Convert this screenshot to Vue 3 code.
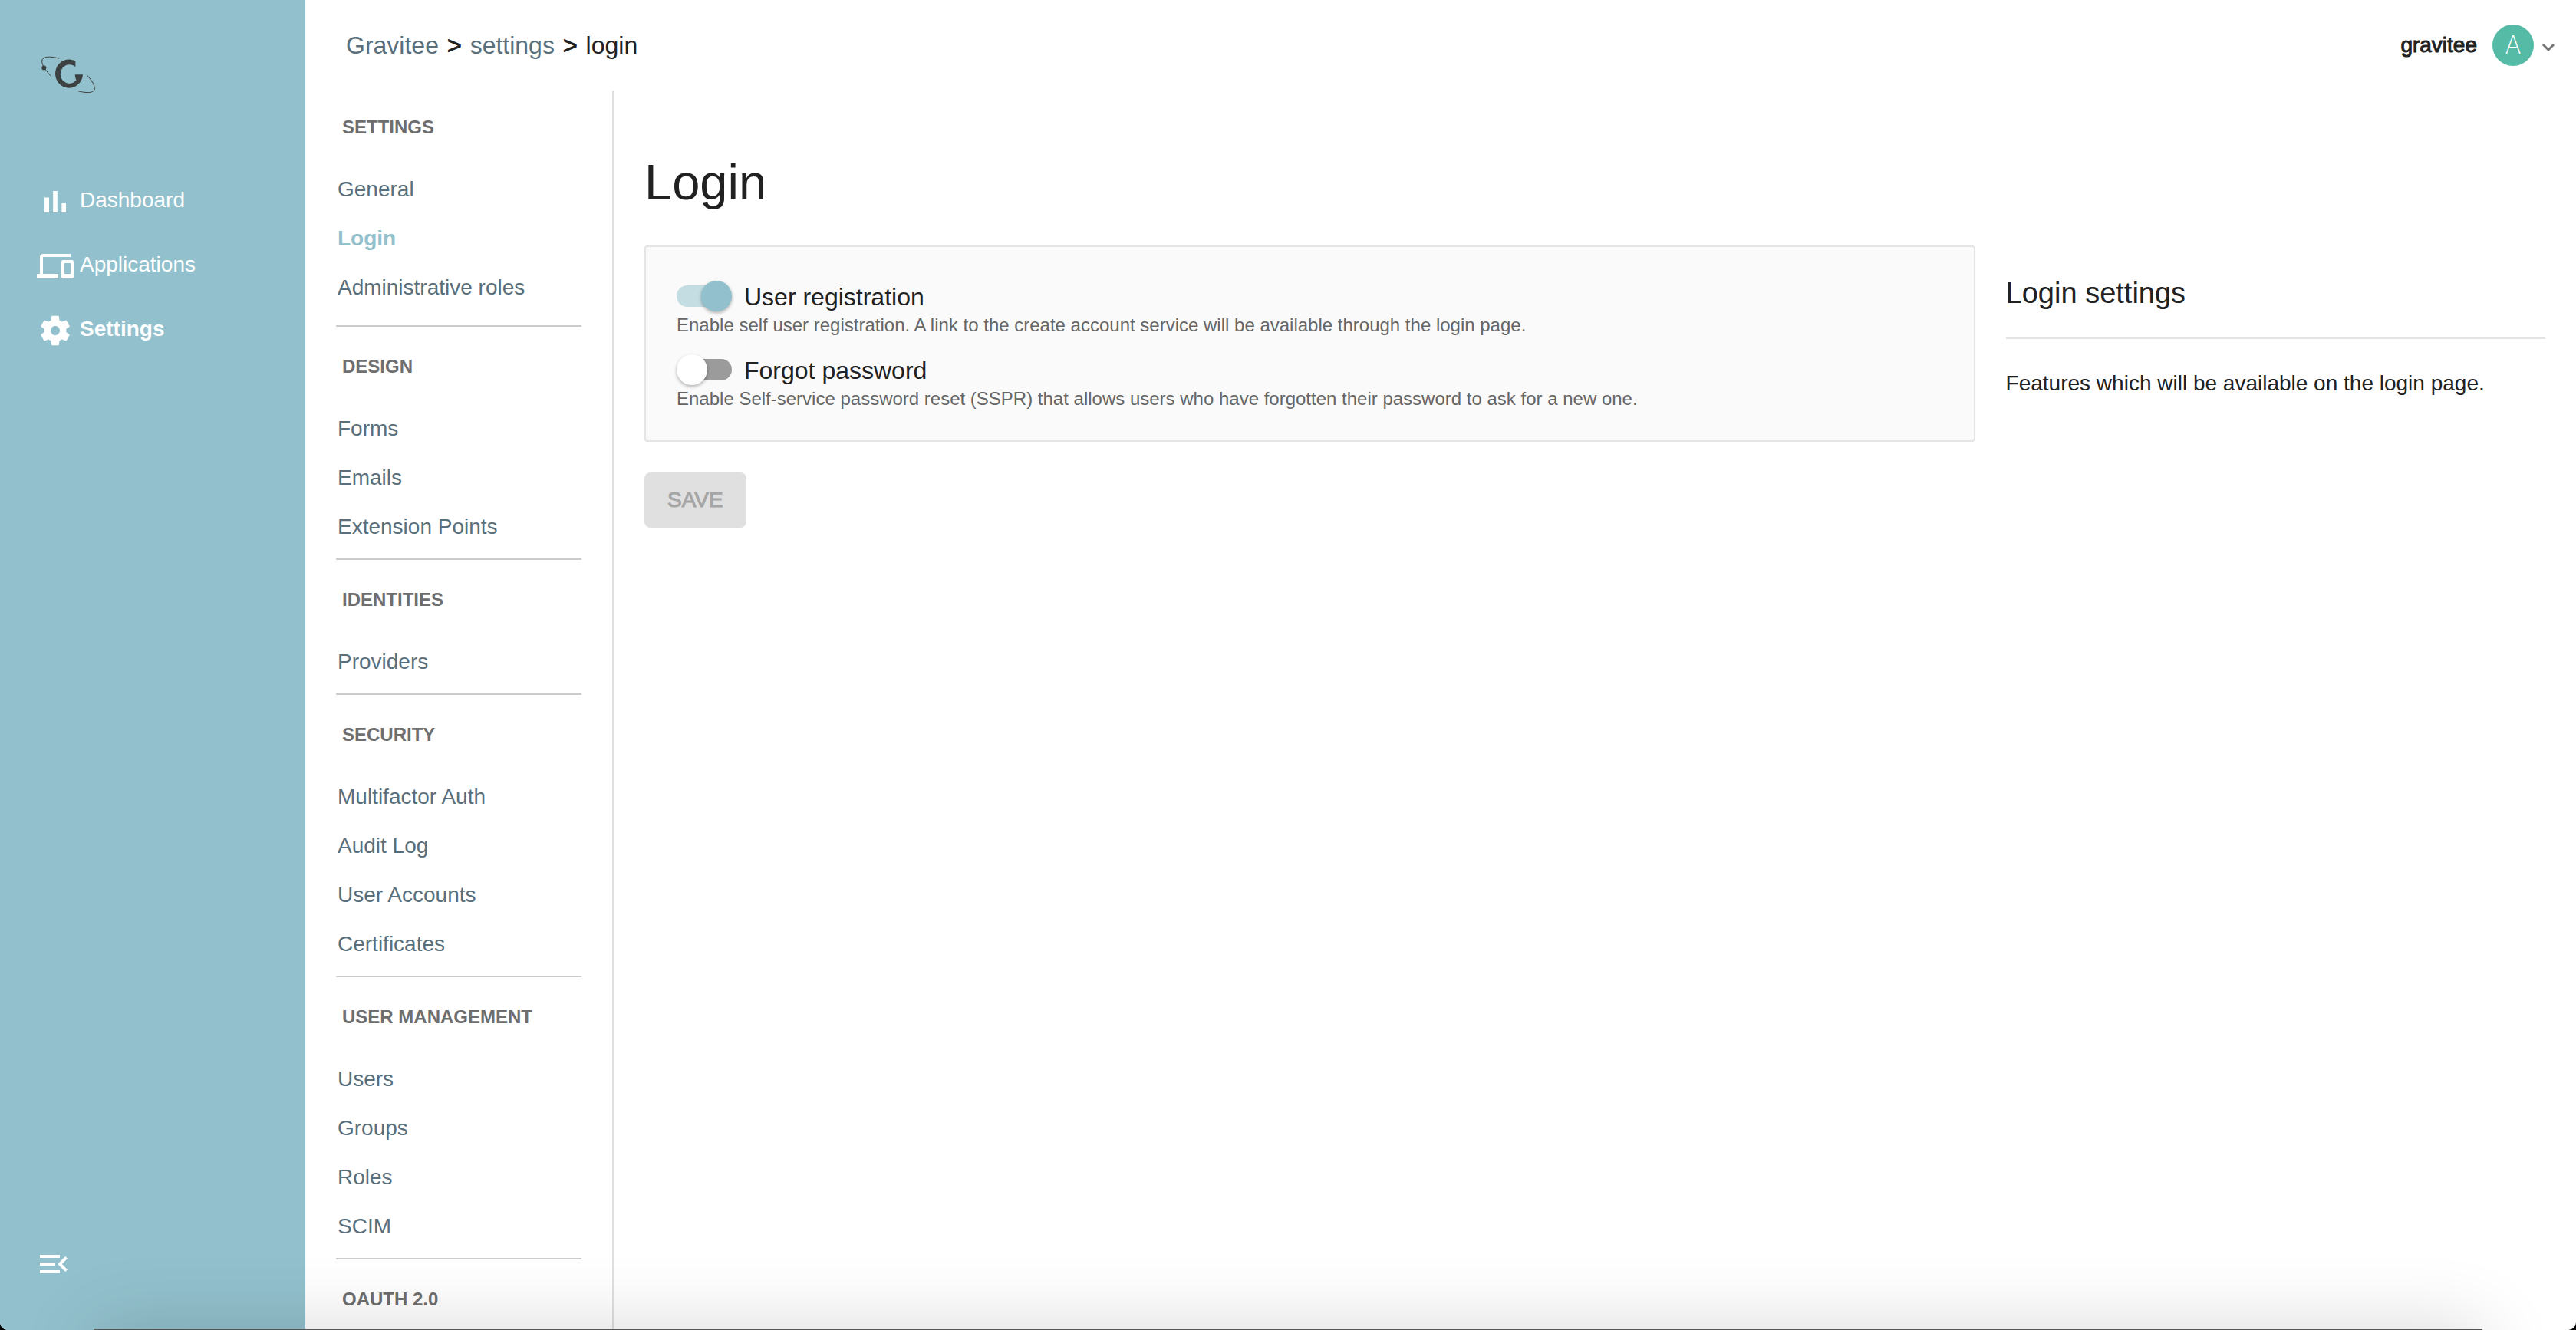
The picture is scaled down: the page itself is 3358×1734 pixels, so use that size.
<script setup>
import { reactive } from 'vue'

const mainNav = [
  { label: 'Dashboard', icon: 'M5 9.2h3V19H5zM10.6 5h2.8v14h-2.8zm5.6 8H19v6h-2.8z' },
  {
    label: 'Applications',
    icon: 'M4 6h18V4H4c-1.1 0-2 .9-2 2v11H0v3h14v-3H4V6zm19 2h-6c-.55 0-1 .45-1 1v10c0 .55.45 1 1 1h6c.55 0 1-.45 1-1V9c0-.55-.45-1-1-1zm-1 9h-4v-7h4v7z'
  },
  {
    label: 'Settings',
    active: true,
    icon: 'M19.14 12.94c.04-.3.06-.61.06-.94 0-.32-.02-.64-.07-.94l2.03-1.58c.18-.14.23-.41.12-.61l-1.92-3.32c-.12-.22-.37-.29-.59-.22l-2.39.96c-.5-.38-1.03-.7-1.62-.94l-.36-2.54c-.04-.24-.24-.41-.48-.41h-3.84c-.24 0-.43.17-.47.41l-.36 2.54c-.59.24-1.13.57-1.62.94l-2.39-.96c-.22-.08-.47 0-.59.22L2.74 8.87c-.12.21-.08.47.12.61l2.03 1.58c-.05.3-.09.63-.09.94s.02.64.07.94l-2.03 1.58c-.18.14-.23.41-.12.61l1.92 3.32c.12.22.37.29.59.22l2.39-.96c.5.38 1.03.7 1.62.94l.36 2.54c.05.24.24.41.48.41h3.84c.24 0 .44-.17.47-.41l.36-2.54c.59-.24 1.13-.56 1.62-.94l2.39.96c.22.08.47 0 .59-.22l1.92-3.32c.12-.22.07-.47-.12-.61l-2.01-1.58zM12 15c-1.65 0-3-1.35-3-3s1.35-3 3-3 3 1.35 3 3-1.35 3-3 3z'
  }
]

const settingsGroups = [
  { title: 'Settings', items: ['General', 'Login', 'Administrative roles'] },
  { title: 'Design', items: ['Forms', 'Emails', 'Extension Points'] },
  { title: 'Identities', items: ['Providers'] },
  { title: 'Security', items: ['Multifactor Auth', 'Audit Log', 'User Accounts', 'Certificates'] },
  { title: 'User Management', items: ['Users', 'Groups', 'Roles', 'SCIM'] },
  { title: 'OAuth 2.0', items: [] }
]
const currentItem = 'Login'

const options = reactive([
  {
    id: 'user-registration',
    label: 'User registration',
    enabled: true,
    hint: 'Enable self user registration. A link to the create account service will be available through the login page.'
  },
  {
    id: 'forgot-password',
    label: 'Forgot password',
    enabled: false,
    hint: 'Enable Self-service password reset (SSPR) that allows users who have forgotten their password to ask for a new one.'
  }
])
</script>

<template>
  <div class="app">
    <aside class="sidebar">
      <a href="#" class="logo" aria-label="Home">
        <svg width="77" height="54" viewBox="150 210 231 161" aria-hidden="true">
          <path class="logo-mark" d="M295 238A54 56 0 1 0 324 291H293Q294 304 298 313A35 37 0 1 1 295 262Z" />
          <path class="logo-orbit" d="M231 228C200 219 163 218 164 240C164 255 180 277 199 297" />
          <path class="logo-orbit" d="M340 293C360 315 372 335 370 348C366 366 332 363 303 355" />
          <circle class="logo-mark" cx="172" cy="265" r="9" />
        </svg>
      </a>
      <nav class="main-nav" aria-label="Main">
        <a v-for="item in mainNav" :key="item.label" href="#" :class="{ active: item.active }">
          <svg width="48" height="48" viewBox="0 0 24 24" aria-hidden="true"><path :d="item.icon" /></svg>
          <span>{{ item.label }}</span>
        </a>
      </nav>
      <button class="collapse" type="button" aria-label="Collapse menu">
        <svg width="48" height="48" viewBox="0 0 24 24" aria-hidden="true">
          <path d="M3 18h13v-2H3v2zM3 13h10v-2H3v2zm0-7v2h13V6H3zm18 9.59L17.42 12 21 8.41 19.59 7l-5 5 5 5L21 15.59z" />
        </svg>
      </button>
    </aside>

    <div class="page">
      <header class="topbar">
        <nav class="breadcrumb" aria-label="Breadcrumb">
          <a href="#">Gravitee</a>
          <span class="sep">&gt;</span>
          <a href="#">settings</a>
          <span class="sep">&gt;</span>
          <span>login</span>
        </nav>
        <button class="user" type="button">
          <span class="user-name">gravitee</span>
          <span class="avatar">A</span>
          <svg width="18" height="12" viewBox="0 0 18 12" aria-hidden="true"><path d="M2 2l7 7 7-7" /></svg>
        </button>
      </header>

      <div class="body">
        <nav class="settings-nav" aria-label="Settings">
          <section v-for="group in settingsGroups" :key="group.title">
            <h2>{{ group.title }}</h2>
            <ul v-if="group.items.length">
              <li v-for="item in group.items" :key="item">
                <a href="#" :class="{ active: item === currentItem }">{{ item }}</a>
              </li>
            </ul>
          </section>
        </nav>

        <main class="content">
          <h1>Login</h1>
          <div class="columns">
            <form class="form" @submit.prevent>
              <div class="card">
                <div v-for="option in options" :key="option.id" class="option">
                  <label :for="option.id">
                    <input
                      :id="option.id"
                      v-model="option.enabled"
                      type="checkbox"
                      role="switch"
                      :aria-describedby="option.id + '-hint'"
                    />
                    <span>{{ option.label }}</span>
                  </label>
                  <p :id="option.id + '-hint'">{{ option.hint }}</p>
                </div>
              </div>
              <button class="save" type="submit" disabled>Save</button>
            </form>
            <section class="help">
              <h3>Login settings</h3>
              <p>Features which will be available on the login page.</p>
            </section>
          </div>
        </main>
      </div>
    </div>
    <div class="edge-shadow" aria-hidden="true"></div>
  </div>
</template>

<style>
html,
body {
  margin: 0;
  background: #000;
}
</style>

<style scoped>
.app {
  position: relative;
  display: flex;
  height: 100vh;
  overflow: hidden;
  border-radius: 0 0 10px 10px;
  background: #fff;
  color: #212121;
  font-family: "Liberation Sans", Arial, sans-serif;
  font-size: 28px;
}
.app * {
  box-sizing: border-box;
}
a {
  color: inherit;
  text-decoration: none;
}
button {
  border: 0;
  padding: 0;
  background: none;
  font: inherit;
  color: inherit;
}
h1,
h2,
h3,
p,
ul {
  margin: 0;
  padding: 0;
  list-style: none;
  font-weight: 400;
}
svg {
  display: block;
  flex: none;
}

.sidebar {
  display: flex;
  flex: none;
  flex-direction: column;
  width: 398px;
  padding: 70px 46px 62px;
  background: #92c1cd;
  color: #fff;
}
.logo {
  padding-left: 4px;
}
.logo-mark {
  fill: #3d4040;
}
.logo-orbit {
  fill: none;
  stroke: #3d4040;
  stroke-width: 3;
}
.main-nav {
  display: flex;
  flex-direction: column;
  gap: 36px;
  margin-top: 115px;
  padding-left: 2px;
}
.main-nav a {
  display: flex;
  gap: 8px;
  height: 48px;
  line-height: 44px;
}
.main-nav svg,
.collapse svg {
  fill: #fff;
}
.main-nav .active {
  font-weight: 700;
}
.collapse {
  align-self: flex-start;
  margin-top: auto;
}

.page {
  display: flex;
  flex: 1;
  flex-direction: column;
  min-width: 0;
}
.topbar {
  display: flex;
  flex: none;
  align-items: center;
  justify-content: space-between;
  height: 118px;
  padding: 0 27px 0 53px;
}
.breadcrumb {
  display: flex;
  gap: 11px;
  font-size: 32px;
}
.breadcrumb a {
  color: #596f7b;
}
.sep,
.user-name,
.save {
  -webkit-text-stroke: 1px currentColor;
}
.user {
  display: flex;
  align-items: center;
}
.avatar {
  width: 54px;
  margin: 0 10px 0 20px;
  border-radius: 50%;
  background: #56bba6;
  color: #fff;
  font-family: Inter, "Open Sans", sans-serif;
  font-size: 32px;
  font-weight: 200;
  line-height: 54px;
  text-align: center;
}
.user path {
  fill: none;
  stroke: #757575;
  stroke-width: 3;
}
.user svg {
  margin-top: 6px;
}

.body {
  display: flex;
  flex: 1;
  min-height: 0;
}
.settings-nav {
  flex: none;
  width: 402px;
  padding: 0 40px;
  border-right: 2px solid #e0e0e0;
  overflow: hidden;
}
.settings-nav section {
  padding-bottom: 10px;
  border-bottom: 2px solid #ccc;
}
.settings-nav section:first-child {
  padding-bottom: 18px;
}
.settings-nav h2 {
  padding: 34px 8px 30px;
  color: #6e6e6e;
  font-size: 24px;
  font-weight: 700;
  line-height: 36px;
  text-transform: uppercase;
}
.settings-nav section:first-child h2 {
  padding-top: 30px;
}
.settings-nav li a {
  display: block;
  padding: 2px 0 0 2px;
  color: #596f7b;
  line-height: 62px;
}
.settings-nav li .active {
  color: #92c1cd;
  font-weight: 700;
}

.content {
  flex: 1;
  min-width: 0;
  padding: 80px 40px 0;
}
h1 {
  margin-bottom: 42px;
  font-size: 65px;
  line-height: 80px;
}
.columns {
  display: flex;
}
.form {
  flex: 0 0 70%;
}
.card {
  display: flex;
  flex-direction: column;
  gap: 20px;
  margin-bottom: 40px;
  padding: 40px;
  border: 2px solid #e4e4e4;
  border-radius: 4px;
  background: #fafafa;
}
.option label {
  display: flex;
  align-items: center;
  gap: 16px;
  height: 48px;
  font-size: 32px;
}
.option span {
  padding-top: 2px;
}
.option p {
  color: #666;
  font-size: 24px;
  line-height: 28px;
}
input {
  display: flex;
  flex: none;
  align-items: center;
  width: 72px;
  height: 28px;
  margin: 0;
  border-radius: 14px;
  background: #9b9b9b;
  appearance: none;
}
input::before {
  width: 40px;
  height: 40px;
  border-radius: 50%;
  background: #fff;
  box-shadow: 0 2px 4px rgba(0, 0, 0, 0.3);
  content: "";
}
input:checked {
  justify-content: flex-end;
  background: #c3dde3;
}
input:checked::before {
  background: #92c1cd;
}
.save {
  padding: 0 30px;
  border-radius: 8px;
  background: #e0e0e0;
  color: #a6a6a6;
  line-height: 72px;
  text-transform: uppercase;
}
.help {
  flex: 1;
  padding: 38px 0 0 40px;
}
.help h3 {
  margin-bottom: 38px;
  padding-bottom: 34px;
  border-bottom: 2px solid #e4e4e4;
  font-size: 38px;
  line-height: 48px;
}
.help p {
  line-height: 40px;
}

/* Soft shadow that rises from the lower edge of the window */
.edge-shadow {
  position: absolute;
  right: 122px;
  bottom: -99px;
  left: 122px;
  height: 100px;
  background: #555;
  box-shadow: 0 0 100px rgba(0, 0, 0, 0.16);
  pointer-events: none;
}
</style>
